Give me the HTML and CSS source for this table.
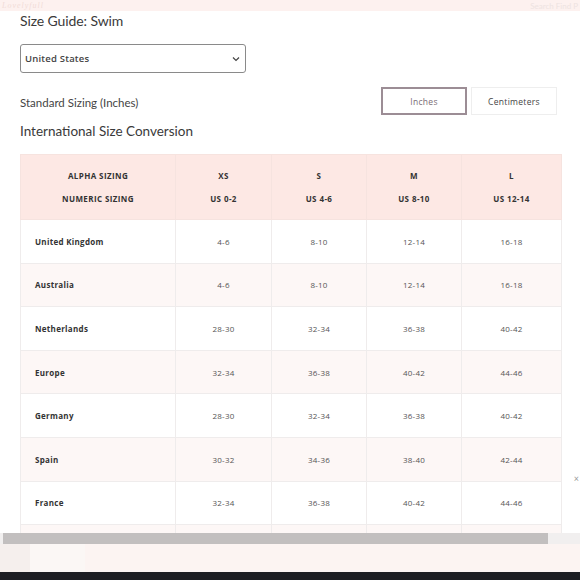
FILE: index.html
```html
<!DOCTYPE html>
<html>
<head>
<meta charset="utf-8">
<link rel="stylesheet" href="styles.css">
</head>
<body>
<div class="topbar">
  <span class="logo">Lovelyfull</span>
  <span class="search">Search Find P</span>
</div>
<main class="page">
  <h1 class="title">Size Guide: Swim</h1>
  <div class="select">
    <span>United States</span>
    <svg class="chev" width="8" height="6" viewBox="0 0 8 6"><path d="M1 1.5 L4 4.5 L7 1.5" fill="none" stroke="#444" stroke-width="1.2"/></svg>
  </div>
  <div class="units">
    <span class="units-label">Standard Sizing (Inches)</span>
    <div class="toggle">
      <button class="btn active">Inches</button>
      <button class="btn">Centimeters</button>
    </div>
  </div>
  <h2 class="subtitle">International Size Conversion</h2>
  <div class="table-wrap">
    <table class="sizes">
      <colgroup><col class="c1"><col class="c2"><col class="c3"><col class="c4"><col class="c5"></colgroup>
      <thead>
        <tr>
          <th><div>ALPHA SIZING</div><div>NUMERIC SIZING</div></th>
          <th><div>XS</div><div>US 0-2</div></th>
          <th><div>S</div><div>US 4-6</div></th>
          <th><div>M</div><div>US 8-10</div></th>
          <th><div>L</div><div>US 12-14</div></th>
        </tr>
      </thead>
      <tbody>
        <tr><td>United Kingdom</td><td>4-6</td><td>8-10</td><td>12-14</td><td>16-18</td></tr>
        <tr><td>Australia</td><td>4-6</td><td>8-10</td><td>12-14</td><td>16-18</td></tr>
        <tr><td>Netherlands</td><td>28-30</td><td>32-34</td><td>36-38</td><td>40-42</td></tr>
        <tr><td>Europe</td><td>32-34</td><td>36-38</td><td>40-42</td><td>44-46</td></tr>
        <tr><td>Germany</td><td>28-30</td><td>32-34</td><td>36-38</td><td>40-42</td></tr>
        <tr><td>Spain</td><td>30-32</td><td>34-36</td><td>38-40</td><td>42-44</td></tr>
        <tr><td>France</td><td>32-34</td><td>36-38</td><td>40-42</td><td>44-46</td></tr>
        <tr><td></td><td></td><td></td><td></td><td></td></tr>
      </tbody>
    </table>
    <span class="close">×</span>
  </div>
</main>
<div class="scrollbar"><div class="thumb"></div></div>
<div class="footer"><div class="f1"></div><div class="f2"></div></div>
<div class="dark"></div>
</body>
</html>
```
FILE: styles.css
```css
* { box-sizing: border-box; }
html, body { margin: 0; padding: 0; }
body {
  width: 580px;
  height: 580px;
  overflow: hidden;
  background: #fff;
  font-family: Lato, "Open Sans", sans-serif;
  color: #333;
}
.topbar {
  height: 11px;
  background: #fdf1ef;
  display: flex;
  justify-content: space-between;
  align-items: center;
  overflow: hidden;
  font-size: 8px;
  line-height: 10px;
}
.logo {
  color: #f1dcd8;
  font-style: italic;
  font-family: "Liberation Serif", serif;
  padding-left: 2px;
  letter-spacing: 1px;
}
.search {
  color: #ede3e1;
  padding-right: 2px;
}
.page {
  padding: 0 19px 0 20px;
  height: 522px;
  overflow: hidden;
}
.title {
  margin: 1px 0 0;
  font-size: 14px;
  line-height: 18px;
  font-weight: 400;
  color: #3a3a3a;
  letter-spacing: -0.1px;
}
.select {
  margin-top: 14px;
  width: 226px;
  height: 29px;
  border: 1px solid #8a8a8a;
  border-radius: 3px;
  display: flex;
  align-items: center;
  justify-content: space-between;
  padding: 0 4px 0 4px;
  font-family: "Open Sans", sans-serif;
  font-size: 9.5px;
  font-weight: 600;
  letter-spacing: 0.2px;
  color: #444;
}
.chev { margin-right: 1px; }
.units {
  margin-top: 14px;
  display: flex;
  align-items: center;
  justify-content: space-between;
  padding-right: 4px;
}
.units-label {
  font-size: 11.5px;
  font-weight: 400;
  color: #444;
  padding-top: 2px;
}
.toggle { display: flex; gap: 4px; }
.btn {
  width: 86px;
  height: 28px;
  background: #fff;
  border: 1px solid #eeeeee;
  font-family: "Open Sans", sans-serif;
  font-size: 8.5px;
  color: #444;
  letter-spacing: 0.3px;
  padding: 0;
}
.btn.active {
  border: 2px solid #9c8d95;
  color: #7a6c74;
}
.subtitle {
  margin: 7px 0 0;
  font-size: 13.5px;
  line-height: 18px;
  font-weight: 400;
  color: #3a3a3a;
}
.table-wrap {
  margin-top: 14px;
  position: relative;
}
.sizes {
  border-collapse: collapse;
  table-layout: fixed;
  width: 541px;
  font-family: "Open Sans", sans-serif;
  font-size: 8px;
}
.c1 { width: 155px; }
.c2 { width: 96px; }
.c3 { width: 95px; }
.c4 { width: 95px; }
.c5 { width: 100px; }
.sizes th {
  background: #fde8e4;
  border: 1px solid #f6e3df;
  height: 65px;
  font-weight: 700;
  color: #333;
  letter-spacing: 0.4px;
  text-align: center;
  padding: 0;
}
.sizes th div { line-height: 23px; }
.sizes td {
  height: 43.6px;
  border: 1px solid #efecec;
  text-align: center;
  color: #555;
  letter-spacing: 0.2px;
  padding: 0;
}
.sizes td:first-child {
  text-align: left;
  padding-left: 14px;
  font-weight: 700;
  color: #333;
  letter-spacing: 0.3px;
}
.sizes tbody tr:nth-child(even) td { background: #fdf7f6; }
.close {
  position: absolute;
  right: -18px;
  top: 320px;
  font-size: 9px;
  color: #999;
  line-height: 9px;
}
.scrollbar {
  height: 11px;
  background: #f1efef;
  padding-left: 3px;
}
.thumb {
  width: 545px;
  height: 11px;
  background: #c2bfbf;
}
.footer {
  height: 28px;
  background: #fcf4f2;
  display: flex;
}
.f1 { width: 30px; background: #f5efed; }
.f2 { width: 55px; background: #fbf7f5; }
.dark { height: 8px; background: #1d1e23; }
```
